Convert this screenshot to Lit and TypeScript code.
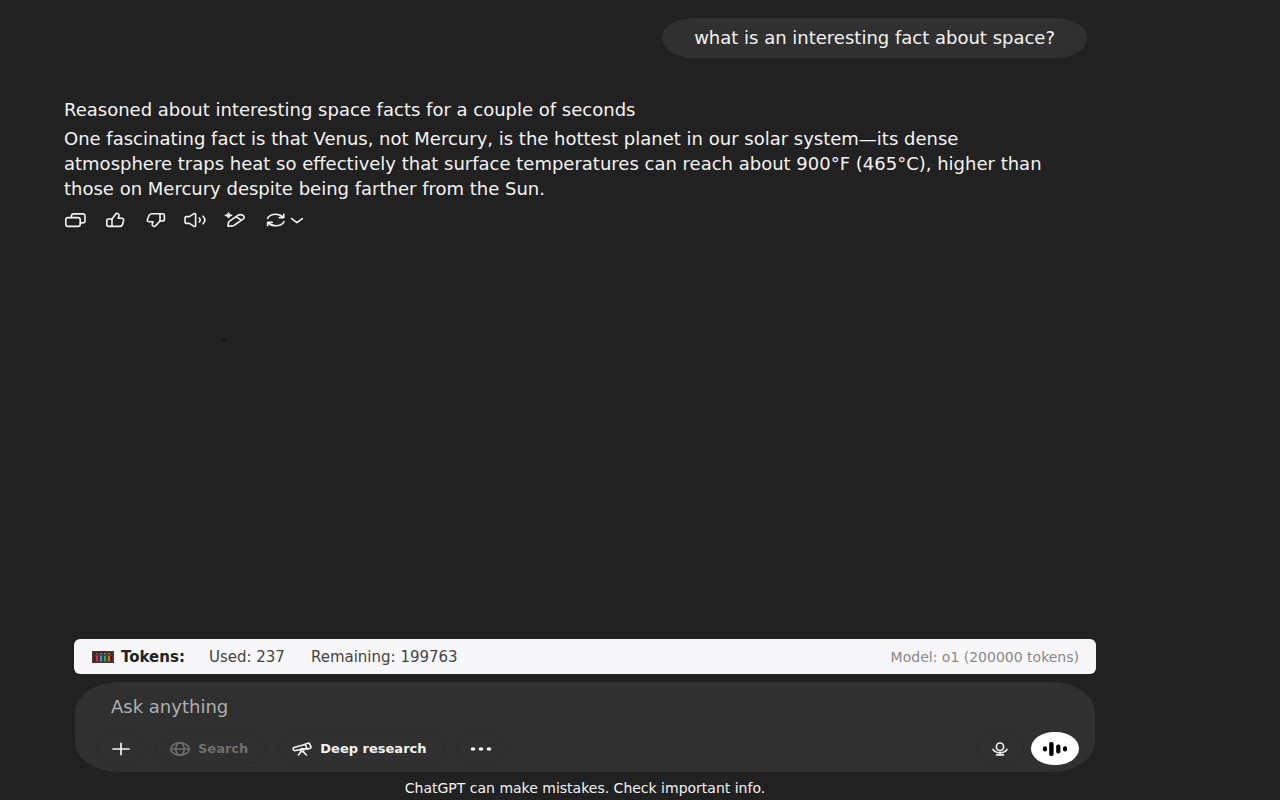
import { LitElement, html, css, svg } from "lit";
import { customElement, state } from "lit/decorators.js";

const icon = (w: number, h: number, body: unknown) => html`
  <svg width=${w} height=${h} viewBox="0 0 ${w} ${h}" fill="none" stroke="currentColor"
    stroke-width="1.6" stroke-linecap="round" stroke-linejoin="round" aria-hidden="true">${body}</svg>`;

const copyIcon = icon(24, 16, svg`
  <rect x="2.8" y="5.6" width="14.4" height="8.8" rx="2.2"/>
  <path d="M8.4 5.4V4Q8.4 1.9 10.8 1.9H19.6Q22 1.9 22 4V9Q22 10.9 19.6 10.9H17.4"/>`);
const upIcon = icon(24, 16, svg`
  <path d="M9 7 12.4 2.4Q13.2 1 15 1.6 16.6 2.4 16 4L15.2 6.2H18.4Q21 6.3 20.6 8.2L19.6 12.2Q19 14.4 16.4 14.4H9"/>
  <path d="M9 7V14.4H5.6Q3.8 14.4 3.8 12.8V8.6Q3.8 7 5.6 7Z"/>`);
const downIcon = icon(24, 16, svg`
  <path d="M17 1.7H9Q6.6 1.7 5.8 3.8L4.4 7.8Q4 9.7 6.6 9.8H10L9.2 12Q8.8 13.7 10.4 14.3 12 14.8 13 13.4L17 9"/>
  <path d="M17 1.7H19.6Q21.4 1.7 21.4 3.4V7.4Q21.4 9 19.6 9H17Z"/>`);
const speakerIcon = icon(24, 16, svg`
  <path d="M2 6Q2 4.6 3.6 4.6H6.4L10.6 1.8Q12.6 .8 12.6 2.6V13.4Q12.6 15.2 10.6 14.2L6.4 11.4H3.6Q2 11.4 2 10Z"/>
  <path d="M16.2 6Q18.2 8 16.2 10M20 4.2Q23.8 8 20 11.8"/>`);
const editIcon = icon(24, 16, svg`
  <path d="M5 14.2 5.4 10.8Q5.6 10 6.6 9.2L14.8 3.4Q17.4 1.8 20 3.4 22.4 5.2 20 7.2L11.6 13Q10.6 13.8 9.4 13.9Z"/>
  <path d="M13.4 4.8 18.2 8.2"/>
  <path d="M5.5 .8Q5.9 3 9.2 3.4 5.9 3.8 5.5 6.2 5.1 3.8 1.8 3.4 5.1 3 5.5 .8Z" fill="currentColor" stroke-width=".9"/>`);
const refreshIcon = icon(24, 16, svg`
  <path d="M4.6 6.4Q6.8 2.2 12.6 2.2 17 2.2 20.2 5.2M20.8 2.2V5.6H16.2M21 9.6Q18.8 13.8 13 13.8 8.4 13.8 5.2 10.8M4.6 13.8V10.4H9.2"/>`);
const chevronIcon = icon(14, 16, svg`<path d="M1.6 6.6 7 10.6 12.4 6.6"/>`);
const plusIcon = icon(20, 14, svg`<path d="M10 1.4V12.6M2 7H18" stroke-width="1.7"/>`);
const globeIcon = icon(20, 14, svg`
  <ellipse cx="10" cy="7" rx="9.1" ry="6.2"/><ellipse cx="10" cy="7" rx="4.2" ry="6.2"/><path d="M1 7H19"/>`);
const telescopeIcon = icon(20, 14, svg`
  <path d="M13.2 2.2 16 1.2Q17.2 1 17.6 1.8L19 4.8Q19.2 5.8 18.2 6.2L15.2 7.2Z"/>
  <path d="M13 2.4 2 5.6Q.8 6 1.2 7L1.6 8Q2 8.8 3.4 8.5L14.8 6.6"/>
  <circle cx="10.2" cy="8.2" r="1.6"/><path d="M9.2 9.6 6.4 13M11.2 9.6 14.4 13"/>`);
const dotsIcon = html`<svg width="22" height="8" viewBox="0 0 22 8" fill="currentColor" aria-hidden="true">
  <ellipse cx="3" cy="4" rx="2.4" ry="1.7"/><ellipse cx="11" cy="4" rx="2.4" ry="1.7"/><ellipse cx="19" cy="4" rx="2.4" ry="1.7"/></svg>`;
const micIcon = icon(18, 14, svg`
  <rect x="5.4" y="1" width="7.2" height="7.6" rx="3.6"/>
  <path d="M2 7.4Q4 10.8 9 10.8T16 7.4M9 10.8V12.8M5.6 12.9H12.4"/>`);
const voiceIcon = html`<svg width="26" height="16" viewBox="0 0 26 16" fill="currentColor" aria-hidden="true">
  <rect x="1" y="5.2" width="4" height="5.4" rx="1.8"/><rect x="7.2" y="1" width="4.4" height="14" rx="1.8"/>
  <rect x="14.2" y="3.6" width="4.2" height="9" rx="1.8"/><rect x="21" y="5.2" width="4" height="5.4" rx="1.8"/></svg>`;

const rods: [number, string][] = [
  [4, "#d8362c"], [8, "#3b8fd8"], [12, "#3aa64c"], [16, "#d8642c"],
];
const abacus = html`<svg width="22" height="12" viewBox="0 0 22 12" aria-hidden="true">
  <rect width="22" height="12" fill="#4d3430"/>
  <rect x="2" y="1.5" width="18" height="9" fill="#231f22"/>
  ${rods.map(([x, c]) => svg`<path d="M${x + 1} 2V3.6M${x + 1} 5V10.5" stroke=${c} stroke-width="2.6"/>`)}
  <path d="M2 4.3H20" stroke="#7a5a48" stroke-width=".8"/></svg>`;

@customElement("app-root")
export class AppRoot extends LitElement {
  @state() private draft = "";

  static styles = css`
    :host {
      display: block;
      background: #212121;
      color: #f3f3f3;
      font: 18px/25px "DejaVu Sans", sans-serif;
    }
    * { box-sizing: border-box; }
    .page {
      min-height: 100vh;
      display: flex;
      flex-direction: column;
      padding: 18px 184px 0 64px;
    }
    p { margin: 0; }
    .bubble {
      align-self: flex-end;
      margin-right: 9px;
      padding: 7px 32px 8px;
      border-radius: 32px / 20px;
      background: #303030;
    }
    .answer { margin-top: 39px; flex: 1; position: relative; }
    .reason { margin-bottom: 4px; }
    .text { max-width: 984px; }
    button {
      display: inline-flex;
      align-items: center;
      justify-content: center;
      padding: 0;
      border: 0;
      background: none;
      color: inherit;
      font: inherit;
    }
    svg { display: block; flex: none; }
    .actions { display: flex; gap: 16px; margin: 11px 0 0 -1px; }
    .actions button { gap: 3px; }
    .speck {
      position: absolute;
      left: 159px;
      top: 242px;
      width: 2px;
      height: 2px;
      background: #0c0c0c;
    }
    .dock { margin: 0 0 0 10px; }
    .tokens {
      display: flex;
      align-items: center;
      height: 35px;
      padding: 0 17px 0 18px;
      border-radius: 6px;
      background: #f7f7f9;
      color: #444;
      font-size: 15px;
      line-height: 20px;
    }
    .tokens strong { margin: 0 24px 0 7px; color: #222; }
    .used { margin-right: 26px; }
    .model { margin-left: auto; color: #888; font-size: 14px; }
    .composer {
      margin: 8px 1px 0;
      padding: 11px 16px 7px 22px;
      border-radius: 44px / 30px;
      background: #303030;
    }
    input {
      display: block;
      width: 100%;
      height: 26px;
      padding: 0 14px;
      border: 0;
      outline: 0;
      background: none;
      color: #f3f3f3;
      font: inherit;
    }
    input::placeholder { color: #afafaf; opacity: 1; }
    .tools { display: flex; gap: 11px; margin-top: 13px; }
    .tools button {
      height: 33px;
      min-width: 48px;
      gap: 8px;
      border: 1px solid #2d2d2d;
      border-radius: 24px / 17px;
      font-size: 13px;
      font-weight: bold;
    }
    .tools .pill { padding: 0 18px 0 13px; }
    .tools .muted { color: #6f6f6f; }
    .tools .mic { margin-left: auto; }
    .tools .voice { margin-left: -4px; border: 0; background: #fff; color: #000; }
    .note { padding: 6px 0 2px; text-align: center; font-size: 14px; line-height: 20px; }
  `;

  render() {
    return html`
      <main class="page">
        <p class="bubble">what is an interesting fact about space?</p>
        <section class="answer">
          <p class="reason">Reasoned about interesting space facts for a couple of seconds</p>
          <p class="text">One fascinating fact is that Venus, not Mercury, is the hottest planet in our solar system—its dense atmosphere traps heat so effectively that surface temperatures can reach about 900°F (465°C), higher than those on Mercury despite being farther from the Sun.</p>
          <div class="actions">
            <button aria-label="Copy">${copyIcon}</button>
            <button aria-label="Good response">${upIcon}</button>
            <button aria-label="Bad response">${downIcon}</button>
            <button aria-label="Read aloud">${speakerIcon}</button>
            <button aria-label="Edit">${editIcon}</button>
            <button aria-label="Try again">${refreshIcon}${chevronIcon}</button>
          </div>
          <span class="speck"></span>
        </section>
        <div class="dock">
          <div class="tokens">
            ${abacus}<strong>Tokens:</strong>
            <span class="used">Used: 237</span><span>Remaining: 199763</span>
            <span class="model">Model: o1 (200000 tokens)</span>
          </div>
          <form class="composer" @submit=${(e: Event) => e.preventDefault()}>
            <input type="text" aria-label="Message" placeholder="Ask anything" .value=${this.draft}
              @input=${(e: Event) => (this.draft = (e.target as HTMLInputElement).value)} />
            <div class="tools">
              <button type="button" aria-label="Add">${plusIcon}</button>
              <button type="button" class="pill muted">${globeIcon}<span>Search</span></button>
              <button type="button" class="pill">${telescopeIcon}<span>Deep research</span></button>
              <button type="button" aria-label="More">${dotsIcon}</button>
              <button type="button" class="mic" aria-label="Dictate">${micIcon}</button>
              <button type="button" class="voice" aria-label="Voice mode">${voiceIcon}</button>
            </div>
          </form>
          <p class="note">ChatGPT can make mistakes. Check important info.</p>
        </div>
      </main>
    `;
  }
}
